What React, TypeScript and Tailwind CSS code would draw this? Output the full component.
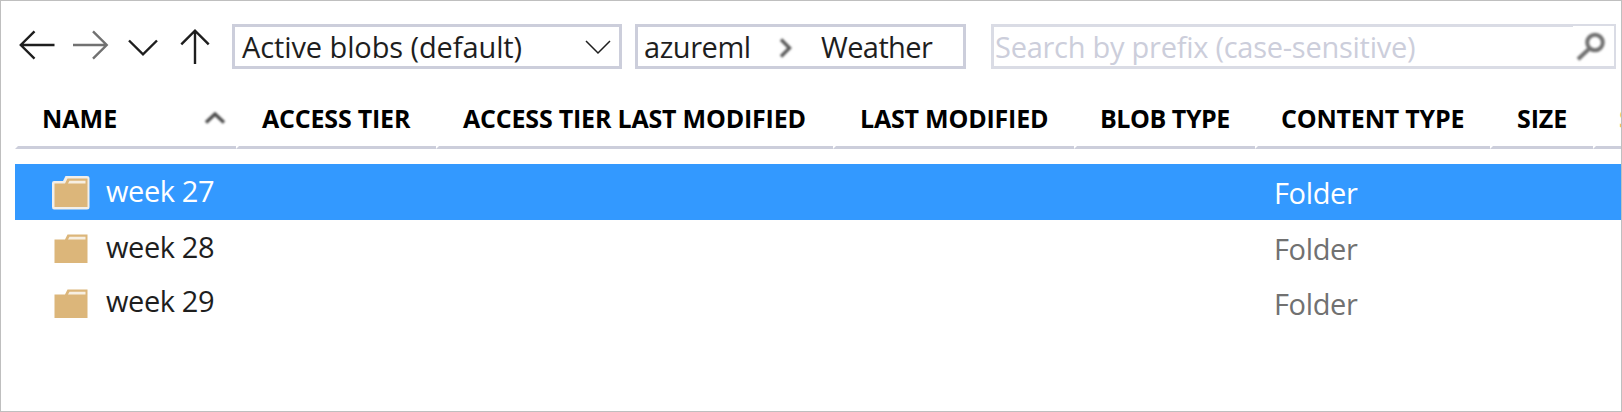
type Column = { label: string; box: string; text: string; sorted?: boolean };

const columns: Column[] = [
  { label: "NAME", box: "w-[221px] pl-[27px]", text: "tracking-[0px]", sorted: true },
  { label: "ACCESS TIER", box: "w-[200px] pl-[26px]", text: "tracking-[-0.2px]" },
  { label: "ACCESS TIER LAST MODIFIED", box: "w-[397px] pl-[27px]", text: "tracking-[-0.2px]" },
  { label: "LAST MODIFIED", box: "w-[241px] pl-[27px]", text: "tracking-[-0.2px]" },
  { label: "BLOB TYPE", box: "w-[181px] pl-[26px]", text: "tracking-[-0.45px]" },
  { label: "CONTENT TYPE", box: "w-[235px] pl-[26px]", text: "tracking-[-0.2px]" },
  { label: "SIZE", box: "w-[103px] pl-[27px]", text: "tracking-[-0.1px]" },
];

const rows = [
  { name: "week 27", row: "h-[56px] bg-[#3399ff] text-white", type: "text-white", nudge: "pb-[2px]", selected: true },
  { name: "week 28", row: "h-[55px] text-[#1e1e1e]", type: "text-[#717171]", nudge: "pb-[2px]", selected: false },
  { name: "week 29", row: "h-[55px] text-[#1e1e1e]", type: "text-[#717171]", nudge: "pb-[4px]", selected: false },
];

function NavIcon({ d, className }: { d: string; className: string }) {
  return (
    <svg width="38" height="38" viewBox="0 0 38 38" fill="none" stroke="currentColor" strokeWidth="2.4" className={className}>
      <path d={d} />
    </svg>
  );
}

function FolderIcon({ selected }: { selected: boolean }) {
  return (
    <svg width="40" height="36" viewBox="0 0 40 36" className="mt-[2px] shrink-0 blur-[0.6px]">
      {selected && (
        <path d="M1 8 Q1 6 3 6 H12 L14.500 1 H36 Q38.500 1 38.500 3 V32 Q38.500 34.500 36 34.500 H3 Q1 34.500 1 32 Z" fill="#f3efe9" />
      )}
      <path d="M3.500 8.500 H14 L16.500 3.500 H36.500 V32 H3.500 Z" fill="#dcb67a" />
      <path d="M18.500 5.800 H34.500 V8.500 H17 Z" fill="#f7efe2" />
    </svg>
  );
}

export default function App() {
  return (
    <div className="h-[412px] w-[1622px] overflow-hidden border border-[#bfbfbf] bg-white font-['Open_Sans','Noto_Sans',sans-serif] text-[29px] text-[#1e1e1e]">
      <div className="flex h-[91px] items-start pt-[23px]">
        <div className="flex h-[45px] items-center pl-[16px]">
          <NavIcon d="M37.500 19 H4 M17.500 5.300 L3.800 19 L17.500 32.700" className="-mt-[3px]" />
          <NavIcon d="M1 19 H34.500 M21 5.300 L34.700 19 L21 32.700" className="-mt-[3px] ml-[17px] text-[#717171]" />
          <NavIcon d="M5 14.500 L19 28.300 L33 14.500" className="-mt-[3px] ml-[14px]" />
          <NavIcon d="M19 38 V5 M5.300 18.300 L19 4.600 L32.700 18.300" className="-mt-[3px] ml-[14px]" />
        </div>
        <div className="ml-[18px] flex h-[45px] w-[390px] shrink-0 items-center justify-between border-3 border-[#cccedb] pr-[8px] pl-[7px] whitespace-nowrap">
          <span className="tracking-[-0.1px]">Active blobs (default)</span>
          <svg width="26" height="16" viewBox="0 0 26 16" fill="none" stroke="#1e1e1e" strokeWidth="1.5">
            <path d="M1 2 L13 14 L25 2" />
          </svg>
        </div>
        <div className="ml-[13px] flex h-[45px] w-[331px] shrink-0 items-center border-3 border-[#cccedb] pl-[6px] whitespace-nowrap">
          <span className="w-[135px] tracking-[-0.45px]">azureml</span>
          <svg width="14" height="22" viewBox="0 0 14 22" fill="none" stroke="#5a5a5a" strokeWidth="3.400" className="mt-[2px] blur-[0.9px]">
            <path d="M2 2.500 L10.500 11 L2 19.500" />
          </svg>
          <span className="ml-[28px] tracking-[-0.6px]">Weather</span>
        </div>
        <div className="relative ml-[25px] flex h-[45px] w-[625px] shrink-0 items-center justify-between border-3 border-[#dadce5] pl-[1px] whitespace-nowrap text-[#cccedb]">
          <span className="tracking-[-0.26px]">Search by prefix (case-sensitive)</span>
          <div className="absolute -top-[1px] -right-[1px] flex h-[40px] w-[41px] bg-white">
            <svg width="41" height="40" viewBox="0 0 41 40" fill="none" stroke="#717171" className="blur-[0.8px]">
              <circle cx="22" cy="16.500" r="7.800" strokeWidth="4" />
              <path d="M16.500 22.500 L5 33.300" strokeWidth="4" />
            </svg>
          </div>
        </div>
      </div>

      <div className="ml-[14px] flex h-[57px] overflow-hidden text-[25px] font-bold text-black">
        {columns.map((c) => (
          <div key={c.label} className={`relative flex h-[57px] shrink-0 items-center pb-[3px] whitespace-nowrap ${c.box}`}>
            <span className={c.text}>{c.label}</span>
            {c.sorted && (
              <svg width="24" height="16" viewBox="0 0 24 16" fill="none" stroke="#4a4a4a" strokeWidth="3.400" className="mb-[2px] ml-[86px] blur-[1.1px]">
                <path d="M3 12.500 L12 4 L21 12.500" />
              </svg>
            )}
            <div className="absolute inset-x-0 bottom-0 h-[3px] bg-[#cccedb] [clip-path:polygon(3px_0,100%_0,100%_100%,0_100%)]" />
          </div>
        ))}
        <div className="relative flex h-[57px] w-[60px] shrink-0 items-center pb-[3px] pl-[26px]">
          <span className="text-[#f0b860]">S</span>
          <div className="absolute inset-x-0 bottom-0 h-[3px] bg-[#cccedb] [clip-path:polygon(3px_0,100%_0,100%_100%,0_100%)]" />
        </div>
      </div>

      <div className="mt-[15px] ml-[14px]">
        {rows.map((r) => (
          <div key={r.name} className={`flex items-center whitespace-nowrap ${r.row}`}>
            <div className="flex w-[1259px] items-center pl-[36px]">
              <FolderIcon selected={r.selected} />
              <span className={`ml-[15px] tracking-[-0.4px] ${r.nudge}`}>{r.name}</span>
            </div>
            <span className={`pt-[2px] tracking-[-0.35px] ${r.type}`}>Folder</span>
          </div>
        ))}
      </div>
    </div>
  );
}
